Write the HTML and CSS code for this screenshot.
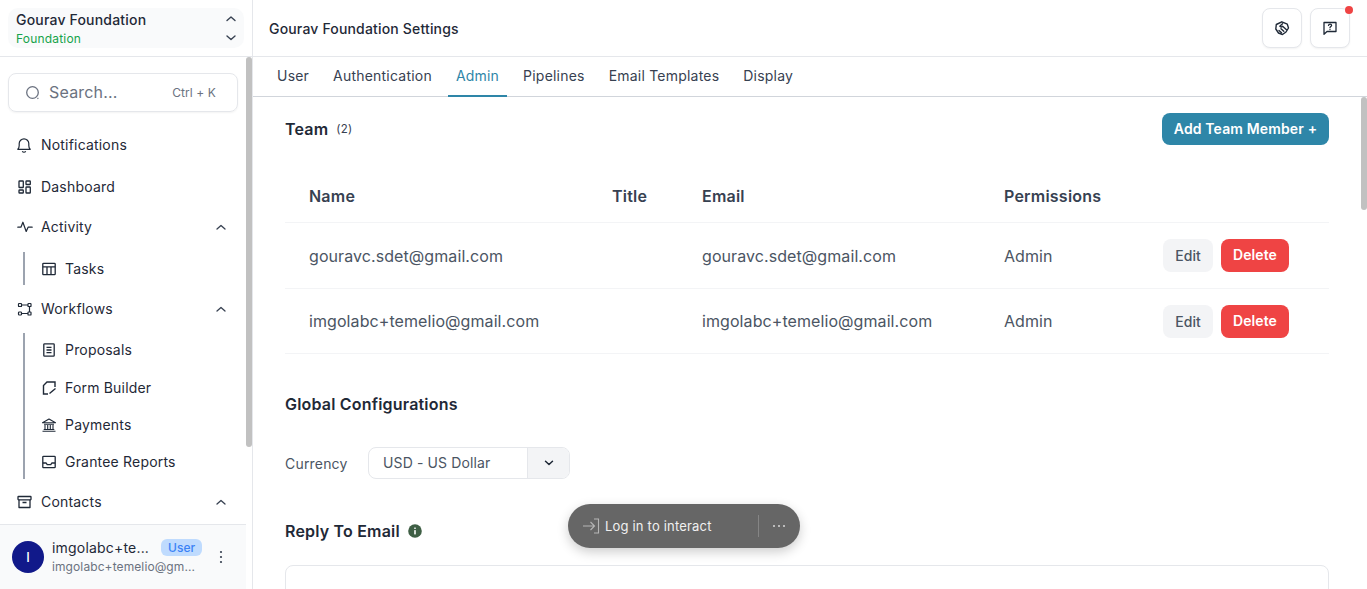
FILE: index.html
```html
<!DOCTYPE html>
<html lang="en">
  <head>
    <meta charset="UTF-8" />
    <meta name="viewport" content="width=device-width, initial-scale=1.0" />
    <title>Gourav Foundation Settings</title>
    <link rel="stylesheet" href="styles.css">
  </head>
  <body>
    <aside class="sidebar">
      <div class="org-wrap">
        <div class="org">
          <div class="org-text">
            <div class="org-name">Gourav Foundation</div>
            <div class="org-type">Foundation</div>
          </div>
          <svg class="org-arrows" viewBox="0 0 12 28" width="12" height="28" fill="none" stroke="#374151" stroke-width="1.4" stroke-linecap="round" stroke-linejoin="round"><path d="M2 6.500 6 3l4 3.500"/><path d="M2 22l4 3.500 4-3.500"/></svg>
        </div>
      </div>

      <div class="side-body">
        <nav class="nav">
          <div class="search">
            <svg viewBox="0 0 16 16" width="16" height="16" fill="none" stroke="#6b7280" stroke-width="1.3"><circle cx="7.500" cy="7.500" r="5.800"/><path d="m12.500 13 .8.8"/></svg>
            <span class="search-text">Search...</span>
            <span class="search-key">Ctrl + K</span>
          </div>

          <a class="item item-notif">
            <svg class="ico" viewBox="0 0 16 16" fill="none" stroke="#1f2937" stroke-width="1.200" stroke-linejoin="round"><path d="M.8 12.300c1-.9 1.400-2 1.400-3.800V6.600a4.800 4.800 0 0 1 9.600 0v1.900c0 1.800.4 2.900 1.400 3.800z"/><path d="M5.300 14.200a1.900 1.900 0 0 0 3.400 0"/></svg>
            Notifications
          </a>
          <a class="item item-dash">
            <svg class="ico" viewBox="0 0 16 16" fill="none" stroke="#1f2937" stroke-width="1.300"><rect x="2" y="2" width="4.300" height="6.500" rx=".6"/><rect x="9" y="2" width="4.300" height="3.500" rx=".6"/><rect x="9" y="8" width="4.300" height="6" rx=".6"/><rect x="2" y="11" width="4.300" height="3" rx=".6"/></svg>
            Dashboard
          </a>
          <a class="item item-group">
            <svg class="ico" viewBox="0 0 16 16" fill="none" stroke="#1f2937" stroke-width="1.200" stroke-linejoin="round" stroke-linecap="round"><path d="M.8 8.200h3.100l2-5 3.300 9.300 1.900-4.300h4.100"/></svg>
            Activity
            <svg class="chev" viewBox="0 0 10 6" fill="none" stroke="#374151" stroke-width="1.300" stroke-linecap="round" stroke-linejoin="round"><path d="M1 5 5 1.500 9 5"/></svg>
          </a>
          <div class="sub sub-activity">
            <a class="subitem sub-tasks">
              <svg class="ico" viewBox="0 0 16 16" fill="none" stroke="#1f2937" stroke-width="1.300"><rect x="1.800" y="2.300" width="12.400" height="11.400" rx=".8"/><path d="M1.800 5.800h12.400M6 5.800v7.900M10 5.800v7.900" /></svg>
              Tasks
            </a>
          </div>
          <a class="item item-group item-flows">
            <svg class="ico" viewBox="0 0 16 16" fill="none" stroke="#1f2937" stroke-width="1.200"><rect x="1.500" y="2.500" width="3" height="3" rx=".6"/><rect x="11" y="2.500" width="3" height="3" rx=".6"/><rect x="1.500" y="11" width="3" height="3" rx=".8"/><rect x="11" y="11" width="3" height="3" rx=".6"/><path d="M4.500 4H11M12.500 5.500V11M4.500 12.500H11"/></svg>
            Workflows
            <svg class="chev" viewBox="0 0 10 6" fill="none" stroke="#374151" stroke-width="1.300" stroke-linecap="round" stroke-linejoin="round"><path d="M1 5 5 1.500 9 5"/></svg>
          </a>
          <div class="sub sub-flows">
            <a class="subitem">
              <svg class="ico" viewBox="0 0 16 16" fill="none" stroke="#1f2937" stroke-width="1.300"><rect x="2.800" y="1.800" width="10.400" height="12.400" rx=".8"/><path d="M5.500 5.300h5M5.500 8h5M5.500 10.700h5"/></svg>
              Proposals
            </a>
            <a class="subitem">
              <svg class="ico" viewBox="0 0 16 16" fill="none" stroke="#1f2937" stroke-width="1.400" stroke-linejoin="miter" stroke-linecap="butt"><path d="M7 14H2.500V5.500L6 2h8v5"/><path d="M8.500 13.500 14.500 8.500"/></svg>
              Form Builder
            </a>
            <a class="subitem">
              <svg class="ico" viewBox="0 0 16 16" fill="none" stroke="#1f2937" stroke-width="1.100" stroke-linejoin="round"><path d="M1.500 5.700 8 2l6.500 3.700z"/><path d="M3 7.300h10M4 8v4M6.700 8v4M9.300 8v4M12 8v4M2.700 12.500h10.600M1.500 14.200h13"/></svg>
              Payments
            </a>
            <a class="subitem">
              <svg class="ico" viewBox="0 0 16 16" fill="none" stroke="#1f2937" stroke-width="1.300" stroke-linejoin="round"><rect x="1.800" y="2.300" width="12.400" height="11.400" rx=".8"/><path d="M1.800 9h3.400l1 1.700h3.600l1-1.700h3.400"/></svg>
              Grantee Reports
            </a>
          </div>
          <a class="item item-group item-contacts">
            <svg class="ico" viewBox="0 0 16 16" fill="none" stroke="#1f2937" stroke-width="1.300" stroke-linejoin="round"><rect x="1" y="2.500" width="13" height="3.300" rx=".5"/><path d="M2 5.800v7.700h11V5.800M5.500 8.500h4"/></svg>
            Contacts
            <svg class="chev" viewBox="0 0 10 6" fill="none" stroke="#374151" stroke-width="1.300" stroke-linecap="round" stroke-linejoin="round"><path d="M1 5 5 1.500 9 5"/></svg>
          </a>
        </nav>
        <div class="side-thumb"></div>
      </div>

      <div class="account">
        <div class="avatar">I</div>
        <div class="acc-text">
          <div class="acc-top">
            <span class="acc-name">imgolabc+te...</span>
            <span class="badge">User</span>
          </div>
          <div class="acc-mail">imgolabc+temelio@gm...</div>
        </div>
        <svg class="acc-more" viewBox="0 0 4 14" width="4" height="14" fill="#374151"><circle cx="2" cy="2" r="1.100"/><circle cx="2" cy="7" r="1.100"/><circle cx="2" cy="12" r="1.100"/></svg>
      </div>
    </aside>

    <main class="main">
      <header class="topbar">
        <h1>Gourav Foundation Settings</h1>
        <div class="top-actions">
          <button class="icon-btn" type="button">
            <svg viewBox="0 0 16 16" width="16" height="16" fill="none" stroke="#1f2937" stroke-width="1.400" stroke-linejoin="round" stroke-linecap="round"><path d="M7.800 1.800 13.300 4.200 14.500 8 12 12 8.500 14.500 4.500 13 1.800 9 2.300 4.500z"/><path d="M8.500 3.800 5.800 6.200c.7 1 1.800 1 2.800.1l3.900 3.500M5 10.500l2.500 2.300M7 8.800l2.800 2.500"/></svg>
          </button>
          <button class="icon-btn icon-btn-dot" type="button">
            <svg viewBox="0 0 16 16" width="16" height="16" fill="none" stroke="#1f2937" stroke-width="1.300" stroke-linejoin="round" stroke-linecap="round"><path d="M2 2.500h12v9H5l-3 2.800z"/><path d="M6.500 5.400c.2-.9.900-1.300 1.600-1.300.9 0 1.500.6 1.500 1.300 0 1.100-1.600 1.200-1.600 2.300"/><path d="M8 9.400v.2"/></svg>
          </button>
        </div>
      </header>

      <div class="tabs">
        <a class="tab">User</a>
        <a class="tab">Authentication</a>
        <a class="tab active">Admin</a>
        <a class="tab">Pipelines</a>
        <a class="tab">Email Templates</a>
        <a class="tab">Display</a>
      </div>

      <div class="content">
        <section class="team-head">
          <div class="team-title"><h2>Team</h2><span class="count">(2)</span></div>
          <button class="add-btn" type="button">Add Team Member +</button>
        </section>

        <div class="table">
          <div class="row row-head">
            <div>Name</div><div>Title</div><div>Email</div><div>Permissions</div><div></div>
          </div>
          <div class="row">
            <div>gouravc.sdet@gmail.com</div><div></div><div>gouravc.sdet@gmail.com</div><div>Admin</div>
            <div class="row-actions"><button class="btn-edit" type="button">Edit</button><button class="btn-del" type="button">Delete</button></div>
          </div>
          <div class="row row-last">
            <div>imgolabc+temelio@gmail.com</div><div></div><div>imgolabc+temelio@gmail.com</div><div>Admin</div>
            <div class="row-actions"><button class="btn-edit" type="button">Edit</button><button class="btn-del" type="button">Delete</button></div>
          </div>
        </div>

        <h3 class="global-title">Global Configurations</h3>
        <div class="currency">
          <span class="currency-label">Currency</span>
          <div class="select">
            <span class="select-value">USD - US Dollar</span>
            <span class="select-arrow">
              <svg viewBox="0 0 10 6" width="10" height="6" fill="none" stroke="#1f2937" stroke-width="1.500" stroke-linecap="round" stroke-linejoin="round"><path d="M1.500 1.200 5 4.500l3.500-3.300"/></svg>
            </span>
          </div>
        </div>

        <div class="reply-title">
          <h3>Reply To Email</h3>
          <svg viewBox="0 0 14 14" width="14" height="14"><circle cx="7" cy="7" r="6.800" fill="#3f5f45"/><rect x="6.200" y="6" width="1.600" height="4.500" rx=".4" fill="#fff"/><rect x="6.200" y="3.400" width="1.600" height="1.600" rx=".4" fill="#fff"/></svg>
        </div>
        <div class="reply-box"></div>
      </div>
      <div class="main-thumb"></div>
    </main>

    <div class="login-pill">
      <svg viewBox="0 0 18 18" width="18" height="18" fill="none" stroke="#b5b5b5" stroke-width="1.100"><path d="M1 9h11M8.500 5l4 4-4 4M12 2h4.500v14H12"/></svg>
      <span class="login-text">Log in to interact</span>
      <span class="login-sep"></span>
      <svg viewBox="0 0 14 4" width="14" height="4" fill="#d8d8d8"><circle cx="2" cy="2" r="1"/><circle cx="7" cy="2" r="1"/><circle cx="12" cy="2" r="1"/></svg>
    </div>
  </body>
</html>
```

FILE: styles.css
```css
* {
  box-sizing: border-box;
}
html,
body {
  height: 100%;
  margin: 0;
  overflow: hidden;
}
body {
  display: flex;
  font-family: Inter, "Liberation Sans", sans-serif;
  letter-spacing: 0.19px;
  color: #1f2937;
  background: #fff;
}
h1,
h2,
h3 {
  margin: 0;
}
button {
  font-family: inherit;
  letter-spacing: inherit;
  cursor: pointer;
}

/* sidebar */
.sidebar {
  width: 253px;
  flex: none;
  display: flex;
  flex-direction: column;
  border-right: 1px solid #e5e7eb;
}
.org-wrap {
  height: 57px;
  flex: none;
  padding: 8px;
  border-bottom: 1px solid #e5e7eb;
}
.org {
  height: 40px;
  display: flex;
  align-items: center;
  justify-content: space-between;
  padding: 0 7px 0 8px;
  background: #f9fafb;
  border-radius: 10px;
}
.org-text {
  padding-top: 2px;
}
.org-name {
  font-size: 14px;
  font-weight: 500;
  line-height: 20px;
  color: #1f2937;
}
.org-type {
  font-size: 12px;
  line-height: 18px;
  color: #16a34a;
}
.side-body {
  flex: 1;
  min-height: 0;
  position: relative;
  overflow: hidden;
}
.nav {
  padding: 16px 0 0 8px;
  width: 245px;
}
.search {
  width: 230px;
  height: 39px;
  display: flex;
  align-items: center;
  padding: 0 21px 0 16px;
  border: 1px solid #e5e7eb;
  border-radius: 8px;
  box-shadow: 0 1px 2px rgba(0, 0, 0, 0.05);
}
.search-text {
  margin-left: 8px;
  padding-bottom: 2px;
  font-size: 16px;
  color: #6b7280;
  flex: 1;
}
.search-key {
  font-size: 12px;
  letter-spacing: 0.1px;
  color: #6b7280;
}
.item,
.subitem {
  display: flex;
  align-items: center;
  font-size: 14px;
  color: #1f2937;
  line-height: 20px;
}
.ico {
  width: 16px;
  height: 16px;
  flex: none;
  margin-right: 8px;
}
.item {
  margin-left: 9px;
  width: 209px;
}
.item-notif {
  margin-top: 23px;
}
.item-dash {
  margin-top: 22px;
}
.item-group {
  margin-top: 20px;
}
.chev {
  width: 10px;
  height: 6px;
  margin-left: auto;
}
.sub {
  margin-left: 15px;
  padding-left: 16px;
  border-left: 2px solid #9ca3af;
}
.sub-activity {
  margin-top: 15px;
  height: 33px;
  padding-top: 7px;
}
.item-flows {
  margin-top: 14px;
}
.sub-flows {
  margin-top: 14px;
  height: 146px;
  padding-top: 7.400px;
  display: flex;
  flex-direction: column;
  gap: 17.300px;
}
.item-contacts {
  margin-top: 13px;
}
.side-thumb {
  position: absolute;
  top: 0;
  right: 0;
  width: 6px;
  height: 390px;
  background: #c1c1c1;
  border-radius: 3px;
}
.account {
  height: 65px;
  flex: none;
  display: flex;
  align-items: center;
  padding: 0 23px 0 12px;
  margin-right: 6px;
  background: #f9fafb;
  border-top: 1px solid #e5e7eb;
}
.avatar {
  width: 32px;
  height: 32px;
  flex: none;
  display: flex;
  align-items: center;
  justify-content: center;
  border-radius: 50%;
  background: #11198a;
  color: #fff;
  font-size: 13px;
  font-weight: 500;
}
.acc-text {
  margin-left: 8px;
  flex: 1;
  margin-top: -2px;
}
.acc-top {
  display: flex;
  align-items: center;
  gap: 12px;
}
.acc-name {
  font-size: 14px;
  line-height: 20px;
  color: #1f2937;
}
.badge {
  padding: 0 7px;
  font-size: 12px;
  letter-spacing: 0;
  font-weight: 500;
  line-height: 17px;
  color: #3b82f6;
  background: #bfdbfe;
  border-radius: 6px;
}
.acc-mail {
  font-size: 12px;
  letter-spacing: 0.1px;
  line-height: 17px;
  color: #6b7280;
}

/* main */
.main {
  flex: 1;
  min-width: 0;
  display: flex;
  flex-direction: column;
  position: relative;
}
.topbar {
  height: 57px;
  flex: none;
  display: flex;
  align-items: center;
  justify-content: space-between;
  padding: 0 17px 0 16px;
  border-bottom: 1px solid #e5e7eb;
}
.topbar h1 {
  font-size: 14px;
  font-weight: 500;
  letter-spacing: 0.17px;
  color: #1f2937;
}
.top-actions {
  display: flex;
  gap: 8px;
}
.icon-btn {
  width: 40px;
  height: 40px;
  display: flex;
  align-items: center;
  justify-content: center;
  position: relative;
  background: #fff;
  border: 1px solid #e5e7eb;
  border-radius: 8px;
  box-shadow: 0 1px 2px rgba(0, 0, 0, 0.05);
}
.icon-btn-dot::after {
  content: "";
  position: absolute;
  top: -3px;
  right: -4px;
  width: 8px;
  height: 8px;
  border-radius: 50%;
  background: #ef4444;
}
.tabs {
  height: 40px;
  flex: none;
  display: flex;
  align-items: stretch;
  padding-left: 16px;
  gap: 8px;
  border-bottom: 1px solid #d1d5db;
}
.tab {
  padding: 0 8px;
  font-size: 14px;
  letter-spacing: 0.21px;
  line-height: 38px;
  color: #374151;
  margin-bottom: -1px;
}
.tab.active {
  color: #2e86a8;
  border-bottom: 2px solid #2e86a8;
}
.content {
  flex: 1;
  min-height: 0;
  overflow: hidden;
  padding: 16px 38px 0 32px;
}
.main-thumb {
  position: absolute;
  top: 97px;
  right: 0;
  width: 6px;
  height: 113px;
  background: #c1c1c1;
  border-radius: 3px;
}
.team-head {
  display: flex;
  align-items: center;
  justify-content: space-between;
  height: 32px;
}
.team-title {
  display: flex;
  align-items: center;
}
.team-title h2 {
  font-size: 16px;
  font-weight: 600;
  color: #1f2937;
}
.count {
  margin-left: 8px;
  font-size: 11.500px;
  color: #374151;
}
.add-btn {
  width: 167px;
  height: 32px;
  padding: 0 0 2px;
  font-size: 14px;
  font-weight: 600;
  letter-spacing: 0.14px;
  color: #fff;
  background: #2e86a8;
  border: 0;
  border-radius: 8px;
}
.table {
  margin-top: 25px;
}
.row {
  display: grid;
  grid-template-columns: 327px 90px 302px 159px 166px;
  align-items: center;
  height: 66px;
  font-size: 16px;
  line-height: 20px;
  letter-spacing: 0.08px;
  color: #4b5563;
  border-bottom: 1px solid #f3f4f6;
}
.row-last {
  height: 65px;
}
.row > div:first-child {
  padding-left: 24px;
}
.row-head {
  height: 53px;
  font-weight: 600;
  letter-spacing: 0.22px;
  color: #374151;
}
.row-actions {
  display: flex;
  gap: 8px;
}
.btn-edit,
.btn-del {
  height: 33px;
  padding: 0;
  font-size: 14px;
  font-weight: 500;
  border: 0;
  border-radius: 8px;
}
.btn-edit {
  width: 50px;
  color: #4b5563;
  background: #f3f4f6;
}
.btn-del {
  width: 68px;
  padding-bottom: 2px;
  font-weight: 600;
  color: #fff;
  background: #ef4444;
}
.global-title {
  margin-top: 40px;
  font-size: 16px;
  line-height: 20px;
  font-weight: 600;
  color: #1f2937;
}
.currency {
  margin-top: 33px;
  display: flex;
  align-items: center;
  color: #4b5563;
}
.currency-label {
  width: 83px;
  font-size: 14px;
}
.select {
  width: 202px;
  height: 32px;
  display: flex;
  border: 1px solid #e5e7eb;
  border-radius: 8px;
  overflow: hidden;
}
.select-value {
  flex: 1;
  padding-left: 14px;
  font-size: 14px;
  letter-spacing: 0.12px;
  line-height: 30px;
}
.select-arrow {
  width: 42px;
  display: flex;
  align-items: center;
  justify-content: center;
  background: #f3f4f6;
  border-left: 1px solid #e5e7eb;
}
.reply-title {
  margin-top: 42px;
  display: flex;
  align-items: center;
  gap: 8px;
}
.reply-title h3 {
  font-size: 16px;
  line-height: 20px;
  font-weight: 600;
  color: #1f2937;
}
.reply-box {
  margin-top: 24px;
  height: 120px;
  border: 1px solid #e5e7eb;
  border-radius: 8px;
}

/* floating login pill */
.login-pill {
  position: absolute;
  left: 568px;
  top: 504px;
  width: 232px;
  height: 44px;
  display: flex;
  align-items: center;
  padding: 0 14px;
  background: #666;
  border-radius: 22px;
  box-shadow: 0 4px 12px rgba(0, 0, 0, 0.2);
}
.login-text {
  margin-left: 5px;
  font-size: 13px;
  color: #f0f0f0;
  flex: 1;
}
.login-sep {
  width: 1px;
  height: 22px;
  margin-right: 13px;
  background: #858585;
}
```
